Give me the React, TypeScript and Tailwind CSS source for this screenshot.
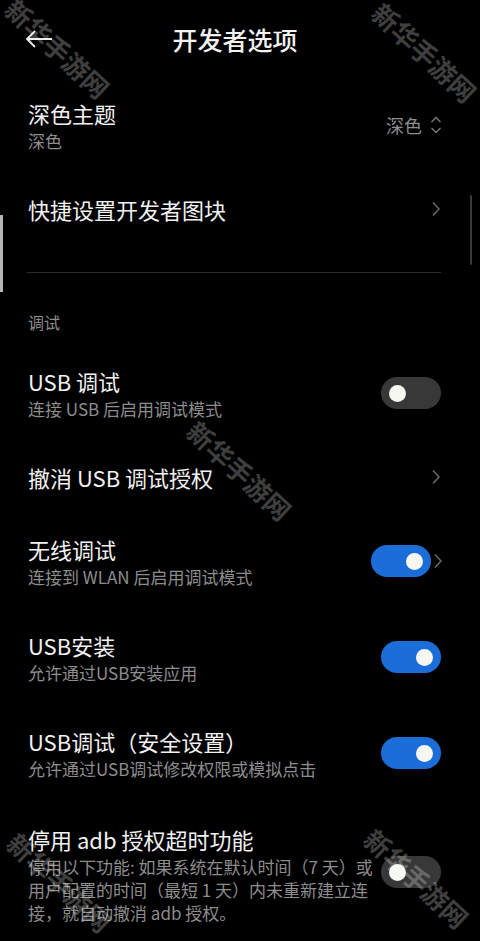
import type { ReactNode } from 'react'

const font = { fontFamily: '"Noto Sans CJK SC", "Noto Sans", sans-serif' }

function Chevron() {
  return (
    <svg width="10" height="16" viewBox="0 0 10 16" className="shrink-0">
      <path d="M2 1.5 L8 8 L2 14.5" fill="none" stroke="#6e6e6e" strokeWidth="1.4" />
    </svg>
  )
}

function UpDown() {
  return (
    <svg width="12" height="20" viewBox="0 0 12 20" className="shrink-0">
      <path d="M1.5 7 L6 2.5 L10.5 7 M1.5 13 L6 17.5 L10.5 13" fill="none" stroke="#7a7a7a" strokeWidth="1.4" />
    </svg>
  )
}

function Toggle({ on }: { on: boolean }) {
  return (
    <div
      className={
        on
          ? 'w-[60px] h-[32px] rounded-full bg-[#1b6ed8] flex items-center justify-end pr-[8px] shrink-0'
          : 'w-[60px] h-[32px] rounded-full bg-[#383838] flex items-center justify-start pl-[8px] shrink-0'
      }
    >
      <div className="w-[17px] h-[17px] rounded-full bg-[#f7f7f2]" />
    </div>
  )
}

function Row({ title, sub, right }: { title: string; sub?: ReactNode; right?: ReactNode }) {
  return (
    <div className="flex items-center pl-[28px] pr-[39px] py-5">
      <div className="flex-1 min-w-0">
        <div className="text-[22px] leading-[32px] text-[#f2f2f2]">{title}</div>
        {sub && <div className="text-[17px] leading-[24px] text-[#8d8d8d]">{sub}</div>}
      </div>
      {right}
    </div>
  )
}

function Watermark({ className }: { className: string }) {
  return (
    <div
      className={
        'absolute pointer-events-none whitespace-nowrap text-[26px] font-bold text-white/25 -translate-x-1/2 -translate-y-1/2 rotate-[43deg] ' +
        className
      }
    >
      新华手游网
    </div>
  )
}

export default function App() {
  return (
    <div className="relative w-[480px] h-[941px] bg-black overflow-hidden" style={font}>
      {/* Header */}
      <div className="relative h-[77px] flex items-center justify-center pr-[10px]">
        <svg width="28" height="20" viewBox="0 0 28 20" className="absolute left-[25px] top-[29px]">
          <path d="M2 10 H27 M10 2 L2 10 L10 18" fill="none" stroke="#f0f0f0" strokeWidth="1.8" />
        </svg>
        <div className="text-[25px] leading-[32px] font-medium text-[#f2f2f2]">开发者选项</div>
      </div>

      <Row
        title="深色主题"
        sub="深色"
        right={
          <div className="flex items-center gap-[8px] text-[18px] text-[#8d8d8d] -mr-[1px]">
            深色
            <UpDown />
          </div>
        }
      />
      <Row title="快捷设置开发者图块" right={<Chevron />} />

      <div className="mt-[27px] ml-[27px] mr-[39px] h-px bg-[#2c2c2c]" />

      <div className="pl-[28px] pt-[39px] pb-[13px] text-[16px] leading-[20px] text-[#8d8d8d]">调试</div>

      <Row title="USB 调试" sub="连接 USB 后启用调试模式" right={<Toggle on={false} />} />
      <Row title="撤消 USB 调试授权" right={<Chevron />} />
      <div className="flex items-center pl-[28px] pr-[39px] py-5">
        <div className="flex-1 min-w-0">
          <div className="text-[22px] leading-[32px] text-[#f2f2f2]">无线调试</div>
          <div className="text-[17px] leading-[24px] text-[#8d8d8d]">连接到 WLAN 后启用调试模式</div>
        </div>
        <Toggle on />
        <div className="ml-[2px] -mr-[2px]">
          <Chevron />
        </div>
      </div>
      <Row title="USB安装" sub="允许通过USB安装应用" right={<Toggle on />} />
      <Row title="USB调试（安全设置）" sub="允许通过USB调试修改权限或模拟点击" right={<Toggle on />} />
      <div className="flex items-center pl-[28px] pr-[39px] pt-[22px]">
        <div className="flex-1 min-w-0">
          <div className="text-[22px] leading-[32px] text-[#f2f2f2]">停用 adb 授权超时功能</div>
          <div className="text-[17px] leading-[23px] text-[#8d8d8d] whitespace-nowrap">
            停用以下功能: 如果系统在默认时间（7 天）或
            <br />
            用户配置的时间（最短 1 天）内未重新建立连
            <br />
            接，就自动撤消 adb 授权。
          </div>
        </div>
        <div className="self-start mt-[33px]">
          <Toggle on={false} />
        </div>
      </div>

      {/* Scroll indicators */}
      <div className="absolute left-0 top-[215px] w-[3px] h-[77px] bg-[#b5b5b5]" />
      <div className="absolute left-[470px] top-[195px] w-[2px] h-[70px] rounded-full bg-[#3a3a3a]" />

      {/* Watermarks */}
      <Watermark className="left-[58px] top-[48px]" />
      <Watermark className="left-[425px] top-[52px]" />
      <Watermark className="left-[240px] top-[470px]" />
      <Watermark className="left-[60px] top-[882px]" />
      <Watermark className="left-[417px] top-[878px]" />
    </div>
  )
}
